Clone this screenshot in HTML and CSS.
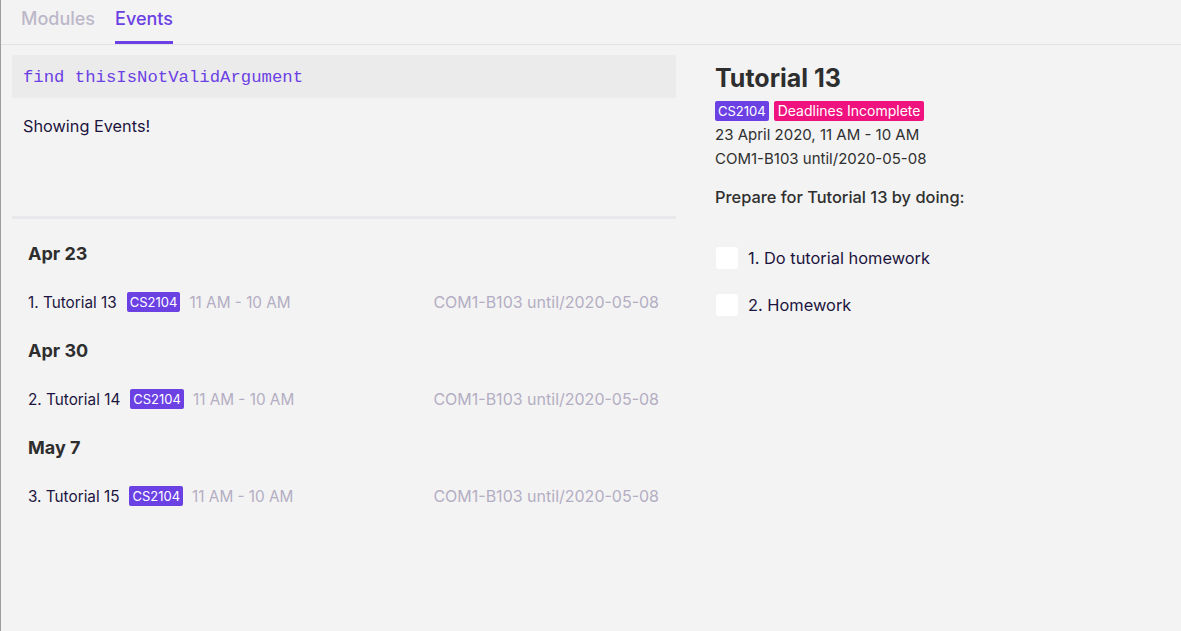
FILE: index.html
```html
<!DOCTYPE html>
<html>
<head>
<meta charset="utf-8">
<link rel="stylesheet" href="styles.css">
</head>
<body>
<div class="app">
  <nav class="tabs">
    <div class="tab">Modules</div>
    <div class="tab active">Events</div>
  </nav>
  <div class="main">
    <section class="left">
      <div class="command">find thisIsNotValidArgument</div>
      <div class="result">Showing Events!</div>
      <div class="divider"></div>
      <div class="events">
        <div class="group">
          <h3 class="date">Apr 23</h3>
          <div class="row">
            <span class="name">1. Tutorial 13</span>
            <span class="badge purple">CS2104</span>
            <span class="time">11 AM - 10 AM</span>
            <span class="loc">COM1-B103 until/2020-05-08</span>
          </div>
        </div>
        <div class="group">
          <h3 class="date">Apr 30</h3>
          <div class="row">
            <span class="name">2. Tutorial 14</span>
            <span class="badge purple">CS2104</span>
            <span class="time">11 AM - 10 AM</span>
            <span class="loc">COM1-B103 until/2020-05-08</span>
          </div>
        </div>
        <div class="group">
          <h3 class="date">May 7</h3>
          <div class="row">
            <span class="name">3. Tutorial 15</span>
            <span class="badge purple">CS2104</span>
            <span class="time">11 AM - 10 AM</span>
            <span class="loc">COM1-B103 until/2020-05-08</span>
          </div>
        </div>
      </div>
    </section>
    <section class="detail">
      <h1 class="title">Tutorial 13</h1>
      <div class="badges">
        <span class="badge purple">CS2104</span>
        <span class="badge pink">Deadlines Incomplete</span>
      </div>
      <div class="info">23 April 2020, 11 AM - 10 AM</div>
      <div class="info">COM1-B103 until/2020-05-08</div>
      <div class="prep">Prepare for Tutorial 13 by doing:</div>
      <ul class="tasks">
        <li class="task"><span class="check"></span><span>1. Do tutorial homework</span></li>
        <li class="task"><span class="check"></span><span>2. Homework</span></li>
      </ul>
    </section>
  </div>
</div>
</body>
</html>
```

FILE: styles.css
```css
* { box-sizing: border-box; }
html, body { margin: 0; padding: 0; }
body {
  background: #f3f3f3;
  font-family: "Inter", "Noto Sans", sans-serif;
  color: #1c1540;
}
.app {
  min-height: 100vh;
  border-left: 1px solid #9d9d9d;
}
.tabs {
  display: flex;
  gap: 20px;
  height: 45px;
  padding-left: 20px;
  border-bottom: 1px solid #e2e2e2;
}
.tab {
  font-size: 18px;
  color: #bcb8c9;
  padding-top: 8px;
  height: 44px;
  font-weight: 500;
}
.tab.active {
  color: #6b41e4;
  border-bottom: 3px solid #6b41e4;
}
.main {
  display: flex;
}
.left {
  width: 688px;
  padding: 10px 13px 0 11px;
}
.command {
  height: 43px;
  background: #ebebeb;
  border-radius: 3px;
  padding: 13px 11px 0;
  font-family: "Liberation Mono", monospace;
  font-size: 17.3px;
  color: #6b41e4;
}
.result {
  height: 118px;
  padding: 18px 11px 0;
  font-size: 16.3px;
}
.divider {
  height: 3px;
  background: #e8e7ec;
}
.events {
  padding: 24px 17px 0 16px;
}
.group {
  margin-bottom: 14px;
}
.date {
  margin: 0;
  font-size: 18px;
  font-weight: 700;
  color: #2e2e2e;
  height: 35px;
}
.row {
  display: flex;
  align-items: center;
  height: 48px;
  font-size: 15.3px;
}
.name { margin-right: 10px; }
.time { color: #b3aec3; margin-left: 9px; }
.loc { color: #b3aec3; margin-left: auto; font-size: 16px; }
.badge {
  display: inline-block;
  color: #fff;
  font-size: 13px;
  line-height: 20px;
  height: 20px;
  padding: 0 3px;
  border-radius: 2px;
}
.purple { background: #6b41e4; }
.pink { background: #f0127e; font-size: 14px; padding: 0 4px; }
.detail {
  padding: 10px 0 0 26px;
  color: #2f2f2f;
}
.title {
  margin: 8px 0 8px;
  font-size: 25px;
  font-weight: 700;
  color: #2e2e2e;
}
.badges {
  display: flex;
  gap: 5px;
  height: 22px;
}
.info {
  font-size: 15px;
  line-height: 24px;
}
.prep {
  margin-top: 16px;
  font-size: 16.4px;
  font-weight: 500;
}
.tasks {
  list-style: none;
  margin: 27px 0 0;
  padding: 0 0 0 1px;
  color: #1c1540;
}
.task {
  display: flex;
  align-items: center;
  gap: 10px;
  height: 47px;
  font-size: 16.4px;
}
.check {
  width: 22px;
  height: 22px;
  background: #fff;
  border-radius: 3px;
}
```
